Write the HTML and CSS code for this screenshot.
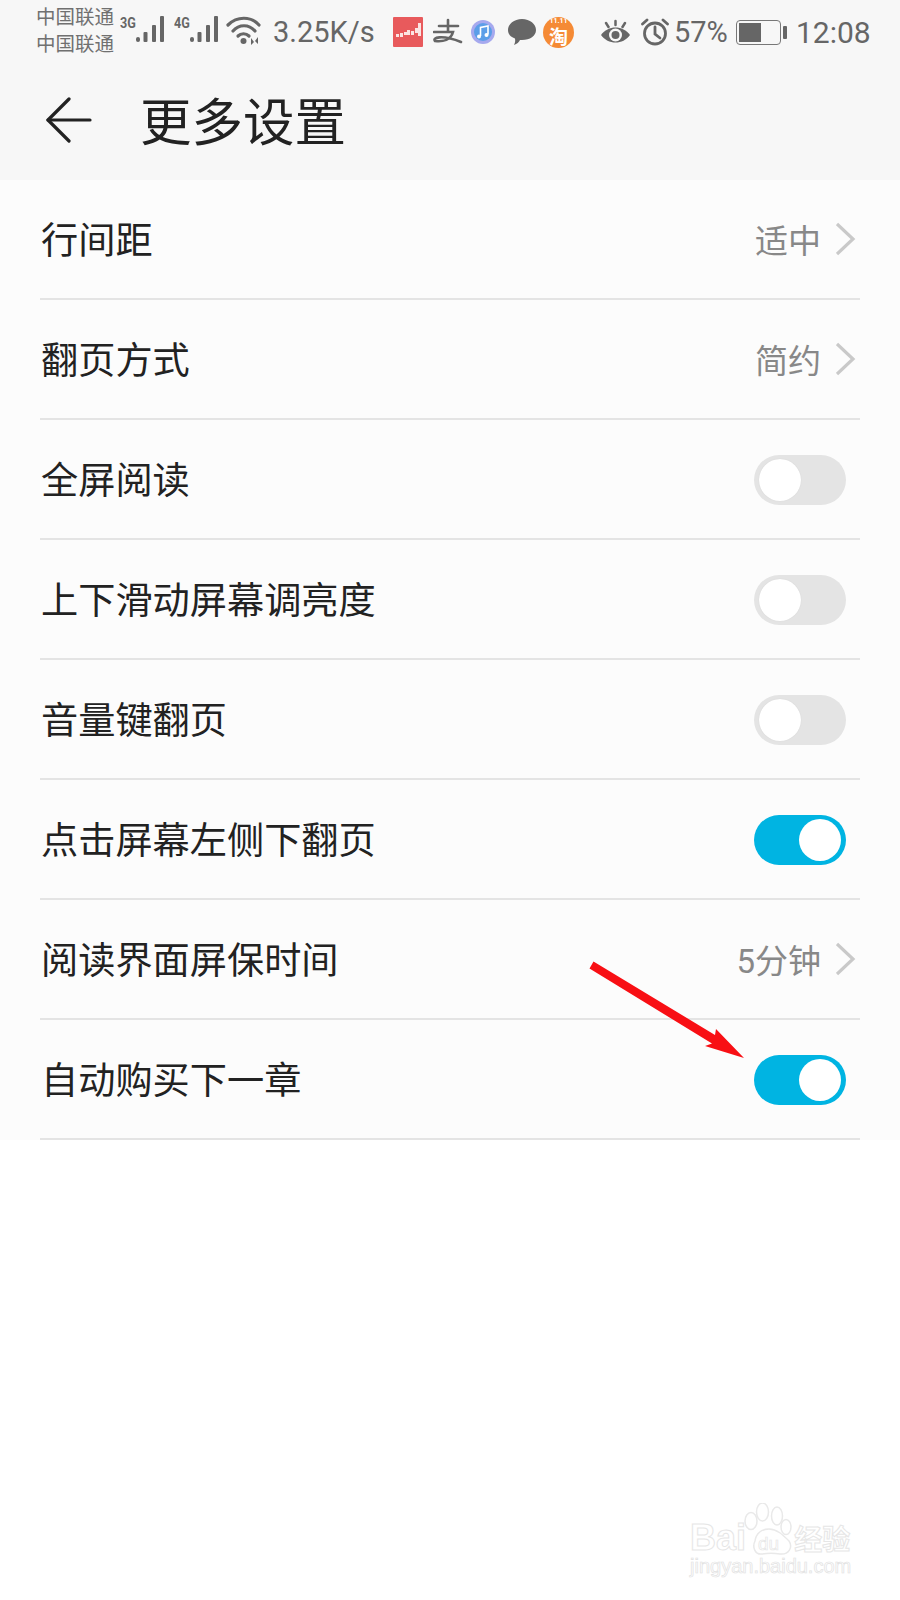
FILE: index.html
```html
<!DOCTYPE html>
<html lang="zh-CN">
<head>
    <meta charset="UTF-8">
    <title>更多设置</title>
    <link rel="stylesheet" href="styles.css">
</head>
<body>

<div class="top">
    <!-- 状态栏 -->
    <div class="status">
        <div class="carrier"><span>中国联通</span><span>中国联通</span></div>
        <div class="net net-first">
            <span class="net-type">3G</span>
            <svg width="30" height="30" viewBox="0 0 30 30"><g fill="#666"><rect x="0" y="23" width="4" height="5" rx="2"/><rect x="7.500" y="18" width="4" height="10" rx="1"/><rect x="16" y="11" width="4" height="17" rx="1"/><rect x="24" y="2" width="4" height="26" rx="1"/></g></svg>
        </div>
        <div class="net net-second">
            <span class="net-type">4G</span>
            <svg width="30" height="30" viewBox="0 0 30 30"><g fill="#666"><rect x="0" y="23" width="4" height="5" rx="2"/><rect x="7.500" y="18" width="4" height="10" rx="1"/><rect x="16" y="11" width="4" height="17" rx="1"/><rect x="24" y="2" width="4" height="26" rx="1"/></g></svg>
        </div>
        <svg class="wifi" width="36" height="30" viewBox="0 0 36 30"><g fill="none" stroke="#666" stroke-width="3.200" stroke-linecap="round"><path d="M2 9C11 0 25 0 33 9"/><path d="M7 15C13 8 23 8 29 15"/><path d="M12 20C15 17 20 17 23 20"/></g><circle cx="17.500" cy="25" r="3" fill="#666"/><path d="M25 29V22L28 26ZM32 21V28L29 25Z" fill="#666"/></svg>
        <span class="speed">3.25K/s</span>
        <svg class="app-red" width="30" height="30" viewBox="0 0 30 30"><rect width="30" height="30" rx="1" fill="#e85a5c"/><g fill="#fbe4e2"><rect x="3" y="17" width="3" height="3"/><rect x="7" y="16" width="3" height="4"/><rect x="11" y="15" width="3" height="3"/><rect x="14" y="13" width="3" height="5"/><rect x="18" y="14" width="3" height="4"/><rect x="22" y="11" width="3" height="5"/><rect x="25" y="6" width="3" height="13"/></g></svg>
        <svg class="app-ali" width="30" height="30" viewBox="0 0 30 30"><g fill="none" stroke="#666" stroke-width="2.600" stroke-linecap="round"><path d="M6 9H25"/><path d="M15 3V14"/><path d="M1 15H20C18 23 10 25 2 24C-1 21 8 17 28 25"/></g></svg>
        <svg class="app-music" width="24" height="24" viewBox="0 0 24 24"><circle cx="12" cy="12" r="12" fill="#a6a9ee"/><circle cx="12" cy="12" r="9" fill="#5b9ee8"/><path d="M9.500 16V7.500L17 6V14.500" fill="none" stroke="#fff" stroke-width="1.600"/><circle cx="8" cy="16.500" r="2" fill="#fff"/><circle cx="15.500" cy="15" r="2" fill="#fff"/></svg>
        <svg class="app-msg" width="30" height="28" viewBox="0 0 30 28"><path d="M15 1C23 1 29 6 29 12C29 18 23 22 15 22H13C12 24 10 26 7 27C8 25 8.500 23 8 20.500C3.500 19 1 16 1 12C1 6 7 1 15 1Z" fill="#666"/></svg>
        <div class="app-tao"><span class="tao-top">11.11</span><span class="tao-word">淘</span></div>
        <svg class="eye" width="31" height="26" viewBox="0 0 31 26"><path d="M1 16C8 6 23 6 30 16C23 26 8 26 1 16Z" fill="#666"/><circle cx="15.500" cy="16" r="6.500" fill="#f7f7f7"/><circle cx="15.500" cy="16" r="4" fill="#666"/><g stroke="#666" stroke-width="2.500" stroke-linecap="round"><path d="M15.500 2V6"/><path d="M6 4L8.500 8"/><path d="M25 4L22.500 8"/></g></svg>
        <svg class="alarm" width="28" height="28" viewBox="0 0 28 28"><g fill="none" stroke="#666" stroke-width="2.800" stroke-linecap="round"><circle cx="14" cy="15.500" r="10.500"/><path d="M14 9V16L19 20"/><path d="M1.500 6L6 2"/><path d="M26.500 6L22 2"/></g></svg>
        <span class="percent">57%</span>
        <div class="battery"><div class="battery-body"><div class="battery-level"></div></div><div class="battery-cap"></div></div>
        <span class="clock">12:08</span>
    </div>

    <!-- 标题栏 -->
    <header class="title-bar">
        <svg class="back" width="46" height="48" viewBox="0 0 46 48"><g fill="none" stroke="#222" stroke-width="3.200" stroke-linecap="round" stroke-linejoin="round"><path d="M23 3L2 24L23 45"/><path d="M2 24H44"/></g></svg>
        <h1>更多设置</h1>
    </header>
</div>

<!-- 设置列表 -->
<ul class="settings">
    <li class="row"><span class="label">行间距</span><span class="value">适中</span><svg class="chevron" width="20" height="34" viewBox="0 0 20 34"><path d="M1 2L17 17L1 32" fill="none" stroke="#c9c9c9" stroke-width="3.200"/></svg></li>
    <li class="row"><span class="label">翻页方式</span><span class="value">简约</span><svg class="chevron" width="20" height="34" viewBox="0 0 20 34"><path d="M1 2L17 17L1 32" fill="none" stroke="#c9c9c9" stroke-width="3.200"/></svg></li>
    <li class="row"><span class="label">全屏阅读</span><span class="switch"></span></li>
    <li class="row"><span class="label">上下滑动屏幕调亮度</span><span class="switch"></span></li>
    <li class="row"><span class="label">音量键翻页</span><span class="switch"></span></li>
    <li class="row"><span class="label">点击屏幕左侧下翻页</span><span class="switch on"></span></li>
    <li class="row"><span class="label">阅读界面屏保时间</span><span class="value">5分钟</span><svg class="chevron" width="20" height="34" viewBox="0 0 20 34"><path d="M1 2L17 17L1 32" fill="none" stroke="#c9c9c9" stroke-width="3.200"/></svg></li>
    <li class="row"><span class="label">自动购买下一章</span><span class="switch on"></span></li>
</ul>

<!-- 红色箭头标注 -->
<svg class="arrow" width="170" height="110" viewBox="0 0 170 110"><path d="M5.500 3.500L127 77L128 71L156 100L117 88L124 85.500L1.500 10.500Z" fill="#f80f14"/></svg>

<!-- 水印 -->
<div class="watermark">
    <svg class="paw" width="50" height="54" viewBox="0 0 50 54"><g fill="none" stroke="#e9e9e9" stroke-width="1.500"><ellipse cx="7" cy="18" rx="6" ry="8.500"/><ellipse cx="18.500" cy="9" rx="6" ry="9"/><ellipse cx="33" cy="13" rx="5.500" ry="9"/><ellipse cx="42" cy="24" rx="5" ry="7.500"/><path d="M11 38C12 30 18 26 25 26C33 26 39 32 45 38C49 44 45 52 36 51C30 50 24 50 18 51C11 52 8 44 11 38Z"/></g></svg>
    <div class="mark-line">
        <span class="mark-bai">Bai</span><span class="mark-du">du</span><span class="mark-cn">经验</span>
    </div>
    <div class="mark-url">jingyan.baidu.com</div>
</div>

</body>
</html>
```

FILE: styles.css
```css
* {
    margin: 0;
    padding: 0;
    box-sizing: border-box;
}
html, body {
    width: 900px;
    height: 1600px;
    overflow: hidden;
}
body {
    position: relative;
    background: #fff;
    font-family: Roboto, "Noto Sans CJK SC", sans-serif;
    color: #222;
}
.top {
    height: 180px;
    background: #f7f7f7;
}
.status {
    height: 60px;
    padding-left: 36px;
    padding-top: 4px;
    display: flex;
    align-items: center;
    color: #666;
}
.carrier {
    width: 80px;
    margin-bottom: 6px;
    display: flex;
    flex-direction: column;
    font-size: 19.500px;
    line-height: 27px;
    white-space: nowrap;
    font-family: "Noto Sans CJK SC", sans-serif;
    color: #707070;
}
.net {
    position: relative;
    width: 46px;
    height: 32px;
    margin-bottom: 8px;
    display: flex;
    justify-content: flex-end;
    align-items: flex-end;
}
.net-first {
    margin-left: 4px;
}
.net-second {
    margin-left: 8px;
}
.net-type {
    position: absolute;
    left: 0;
    top: 5px;
    font-size: 14px;
    line-height: 12px;
    font-weight: 700;
    transform: scaleX(0.9);
    transform-origin: left;
}
.wifi {
    margin-left: 6px;
    margin-bottom: 2px;
}
.speed {
    margin-left: 11px;
    width: 105px;
    font-size: 29px;
    white-space: nowrap;
}
.app-red {
    margin-left: 15px;
}
.app-ali {
    margin-left: 10px;
}
.app-music {
    margin-left: 8px;
}
.app-msg {
    margin-left: 12px;
}
.app-tao {
    margin-left: 6px;
    width: 31px;
    height: 31px;
    border-radius: 50%;
    background: #f58a35;
    color: #fff;
    display: flex;
    flex-direction: column;
    align-items: center;
    overflow: hidden;
}
.tao-top {
    font-size: 7px;
    line-height: 9px;
    font-weight: 700;
}
.tao-word {
    font-size: 19px;
    line-height: 20px;
    font-weight: 700;
    font-family: "Noto Sans CJK SC", sans-serif;
}
.eye {
    margin-left: 26px;
}
.alarm {
    margin-left: 10px;
}
.percent {
    margin-left: 5px;
    width: 54px;
    font-size: 29px;
}
.battery {
    margin-left: 8px;
    width: 51px;
    display: flex;
    align-items: center;
}
.battery-body {
    width: 45px;
    height: 25px;
    padding: 2px;
    border: 1.500px solid #777;
    border-radius: 4px;
}
.battery-level {
    width: 57%;
    height: 100%;
    background: #666;
}
.battery-cap {
    margin-left: 2px;
    width: 4px;
    height: 13px;
    background: #666;
    border-radius: 1px;
}
.clock {
    margin-left: 9px;
    font-size: 30px;
}
.title-bar {
    height: 120px;
    padding-left: 46px;
    display: flex;
    align-items: center;
}
.back {
    flex: none;
}
.title-bar h1 {
    margin-left: 48px;
    margin-bottom: 2px;
    font-family: "Noto Sans CJK SC", sans-serif;
    font-size: 51.500px;
    font-weight: 400;
    line-height: 60px;
    color: #222;
}
.settings {
    list-style: none;
    height: 960px;
    padding: 0 40px;
    background: #fcfcfc;
}
.row {
    height: 120px;
    padding: 2px 4px 0 1px;
    border-bottom: 2px solid #e4e4e4;
    display: flex;
    align-items: center;
}
.label {
    flex: 1;
    margin-bottom: 4px;
    font-family: "Noto Sans CJK SC", sans-serif;
    font-size: 37.200px;
    color: #222;
}
.value {
    margin-bottom: 3px;
    font-size: 33px;
    font-family: Roboto, "Noto Sans CJK SC", sans-serif;
    color: #888;
}
.chevron {
    margin-left: 15px;
    margin-bottom: 2px;
}
.switch {
    position: relative;
    width: 92px;
    height: 50px;
    margin-right: 10px;
    border-radius: 25px;
    background: #e4e4e4;
}
.switch::after {
    content: "";
    position: absolute;
    left: 5px;
    top: 4px;
    width: 42px;
    height: 42px;
    border-radius: 50%;
    background: #fff;
    box-shadow: 0 0 1px #ccc;
}
.switch.on {
    background: #00b4e2;
}
.switch.on::after {
    left: 45px;
    box-shadow: none;
}
.arrow {
    position: absolute;
    left: 588px;
    top: 958px;
}
.watermark {
    position: absolute;
    left: 690px;
    top: 1499px;
    width: 165px;
    color: #e6e6e6;
}
.paw {
    position: absolute;
    left: 54px;
    top: 4px;
}
.mark-line {
    margin-top: 24px;
    height: 32px;
    display: flex;
    align-items: baseline;
    line-height: 30px;
}
.mark-bai {
    font-family: "Liberation Sans", sans-serif;
    font-size: 36px;
    font-weight: 700;
    color: #fff;
    -webkit-text-stroke: 1px #e6e6e6;
}
.mark-du {
    position: relative;
    margin-left: 12px;
    font-family: "Liberation Sans", sans-serif;
    font-size: 19px;
    color: #fff;
    -webkit-text-stroke: 0.700px #e6e6e6;
}
.mark-cn {
    margin-left: 15px;
    font-family: "Noto Sans CJK SC", sans-serif;
    font-size: 28px;
    font-weight: 700;
    color: #fff;
    -webkit-text-stroke: 1px #e6e6e6;
}
.mark-url {
    font-family: "Liberation Sans", sans-serif;
    font-size: 20px;
    line-height: 22px;
    color: #fff;
    -webkit-text-stroke: 0.700px #e2e2e2;
    white-space: nowrap;
}
```
